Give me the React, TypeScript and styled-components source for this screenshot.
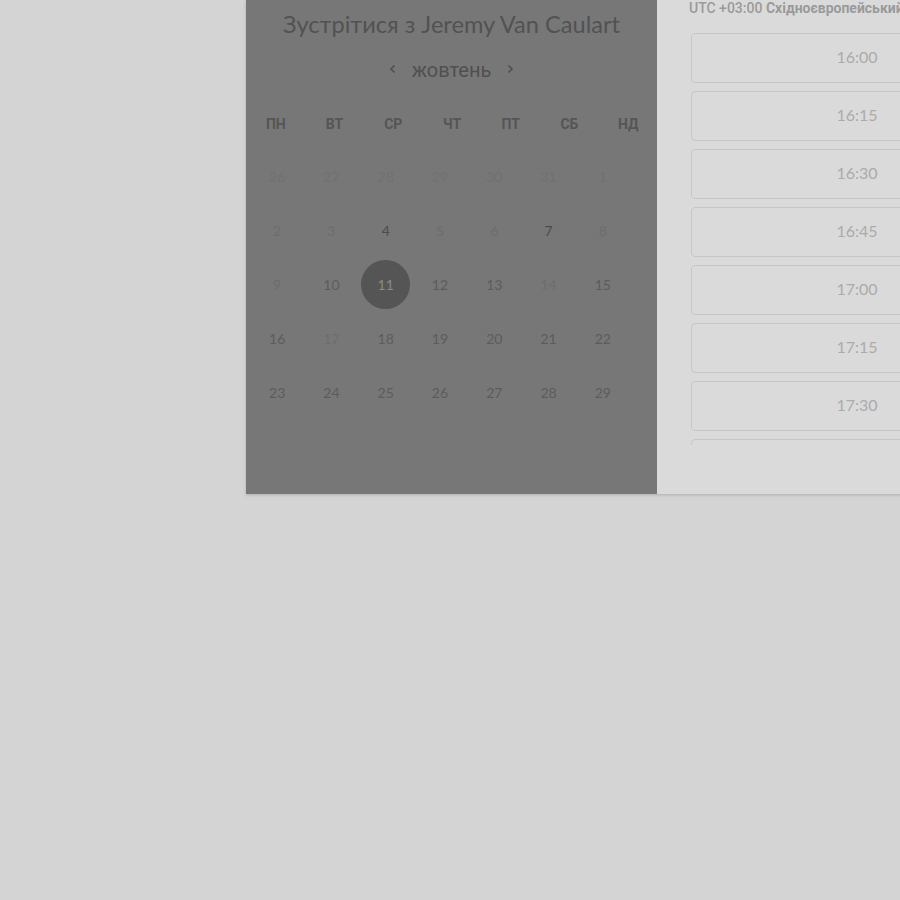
import React from "react";
import styled, { createGlobalStyle } from "styled-components";

const Global = createGlobalStyle`
  html, body { margin: 0; padding: 0; background: #d4d4d4; overflow: hidden; }
  body { font-family: Lato, Roboto, "Liberation Sans", sans-serif; }
`;

const Page = styled.div`
  width: 900px;
  height: 900px;
  overflow: hidden;
`;

const Card = styled.div`
  display: flex;
  margin-left: 246px;
  width: 720px;
  height: 494px;
  box-shadow: 0 1px 3px rgba(0, 0, 0, 0.18);
`;

const CalendarPanel = styled.div`
  width: 411px;
  flex: none;
  background: #777777;
  display: flex;
  flex-direction: column;
`;

const Title = styled.h1`
  margin: 10px 0 0;
  font-family: Lato, Roboto, sans-serif;
  font-weight: 400;
  font-size: 23.6px;
  line-height: 28px;
  color: #525252;
  text-align: center;
`;

const MonthNav = styled.div`
  margin-top: 18px;
  height: 28px;
  display: flex;
  align-items: center;
  justify-content: center;
  gap: 12px;
  color: #505050;
`;

const MonthName = styled.span`
  font-family: Roboto, sans-serif;
  font-size: 20px;
  line-height: 28px;
`;

const Chevron = styled.svg`
  width: 14px;
  height: 14px;
  margin-top: -2px;
`;

const Weekdays = styled.div`
  margin-top: 30px;
  display: grid;
  grid-template-columns: repeat(7, 1fr);
  height: 20px;
  align-items: center;
`;

const Weekday = styled.span`
  text-align: center;
  font-family: Roboto, sans-serif;
  font-weight: 700;
  font-size: 14px;
  color: #555555;
  padding-left: 1px;
`;

const Days = styled.div`
  margin: 16px 0 0 4px;
  width: 380px;
  display: grid;
  grid-template-columns: repeat(7, 1fr);
  grid-auto-rows: 53.8px;
`;

const Day = styled.div<{ $tone: "off" | "dim" | "on" | "strong" | "sel" }>`
  display: flex;
  align-items: center;
  justify-content: center;
  font-family: Lato, sans-serif;
  font-size: 14px;
  color: ${(p) =>
    p.$tone === "off"
      ? "#717171"
      : p.$tone === "dim"
      ? "#6d6d6d"
      : p.$tone === "strong"
      ? "#4c4c4c"
      : p.$tone === "sel"
      ? "#8a8a8a"
      : "#5c5c5c"};
`;

const Selected = styled.span`
  width: 49px;
  height: 49px;
  border-radius: 50%;
  background: #555555;
  display: flex;
  align-items: center;
  justify-content: center;
`;

const SlotsPanel = styled.div`
  flex: 1;
  background: #dadada;
  display: flex;
  flex-direction: column;
  padding-left: 31px;
`;

const TimeZone = styled.div`
  font-family: Roboto, sans-serif;
  font-size: 14px;
  line-height: 16px;
  font-weight: 500;
  color: #9a9a9a;
  white-space: nowrap;
  overflow: hidden;
  width: 211px;
  padding-left: 1px;
`;

const Strong = styled.b`
  font-weight: 700;
`;

const SlotList = styled.div`
  margin: 17px 0 0 3px;
  height: 412px;
  overflow: hidden;
  display: flex;
  flex-direction: column;
  gap: 8px;
`;

const Slot = styled.div`
  flex: none;
  box-sizing: border-box;
  width: 332px;
  height: 50px;
  border: 1px solid #c6c6c6;
  border-radius: 4px;
  display: flex;
  align-items: center;
  justify-content: center;
  font-family: Lato, sans-serif;
  font-size: 16px;
  line-height: 20px;
  padding-bottom: 2px;
  color: #ababab;
`;

const weekdays = ["ПН", "ВТ", "СР", "ЧТ", "ПТ", "СБ", "НД"];

type Tone = "off" | "dim" | "on" | "strong" | "sel";
const days: [string, Tone][] = [
  ["26", "off"], ["27", "off"], ["28", "off"], ["29", "off"], ["30", "off"], ["31", "off"], ["1", "off"],
  ["2", "dim"], ["3", "dim"], ["4", "strong"], ["5", "dim"], ["6", "dim"], ["7", "strong"], ["8", "dim"],
  ["9", "dim"], ["10", "on"], ["11", "sel"], ["12", "on"], ["13", "on"], ["14", "dim"], ["15", "on"],
  ["16", "on"], ["17", "dim"], ["18", "on"], ["19", "on"], ["20", "on"], ["21", "on"], ["22", "on"],
  ["23", "on"], ["24", "on"], ["25", "on"], ["26", "on"], ["27", "on"], ["28", "on"], ["29", "on"],
];

const times = ["16:00", "16:15", "16:30", "16:45", "17:00", "17:15", "17:30", "17:45"];

export default function App() {
  return (
    <Page>
      <Global />
      <Card>
        <CalendarPanel>
          <Title>Зустрітися з Jeremy Van Caulart</Title>
          <MonthNav>
            <Chevron viewBox="0 0 14 14" fill="none" stroke="currentColor" strokeWidth="1.6">
              <path d="M8.5 3.5 5 7l3.5 3.5" />
            </Chevron>
            <MonthName>жовтень</MonthName>
            <Chevron viewBox="0 0 14 14" fill="none" stroke="currentColor" strokeWidth="1.6">
              <path d="M5.5 3.5 9 7l-3.5 3.5" />
            </Chevron>
          </MonthNav>
          <Weekdays>
            {weekdays.map((w) => (
              <Weekday key={w}>{w}</Weekday>
            ))}
          </Weekdays>
          <Days>
            {days.map(([d, t], i) => (
              <Day key={i} $tone={t}>
                {t === "sel" ? <Selected>{d}</Selected> : d}
              </Day>
            ))}
          </Days>
        </CalendarPanel>
        <SlotsPanel>
          <TimeZone>
            UTC +03:00 <Strong>Східноєвропейський час</Strong>
          </TimeZone>
          <SlotList>
            {times.map((t) => (
              <Slot key={t}>{t}</Slot>
            ))}
          </SlotList>
        </SlotsPanel>
      </Card>
    </Page>
  );
}
